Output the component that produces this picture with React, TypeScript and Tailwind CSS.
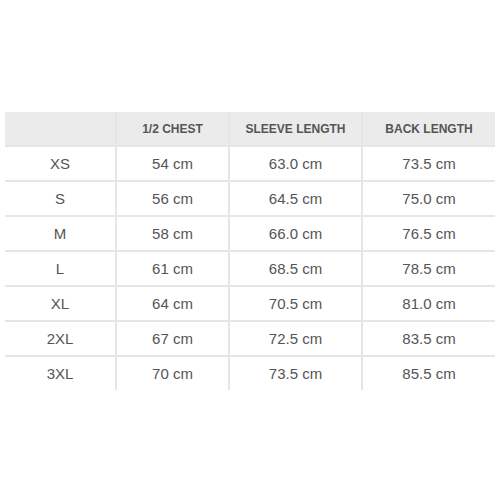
const headers = ['', '1/2 CHEST', 'SLEEVE LENGTH', 'BACK LENGTH']

const rows = [
  ['XS', '54 cm', '63.0 cm', '73.5 cm'],
  ['S', '56 cm', '64.5 cm', '75.0 cm'],
  ['M', '58 cm', '66.0 cm', '76.5 cm'],
  ['L', '61 cm', '68.5 cm', '78.5 cm'],
  ['XL', '64 cm', '70.5 cm', '81.0 cm'],
  ['2XL', '67 cm', '72.5 cm', '83.5 cm'],
  ['3XL', '70 cm', '73.5 cm', '85.5 cm'],
]

export default function App() {
  return (
    <div className="w-[500px] h-[500px] bg-white pt-[112px] px-[5px] font-['Liberation_Sans',Arial,sans-serif]">
      {/* Size chart */}
      <div className="grid grid-cols-[110px_111px_131px_132px] gap-[2px] bg-[#e6e6e6]">
        {headers.map((h, i) => (
          <div
            key={i}
            className="h-[33px] bg-[#ebebeb] flex items-center justify-center text-[12px] font-bold text-[#555]"
          >
            {h}
          </div>
        ))}
        {rows.map((row) =>
          row.map((cell, j) => (
            <div
              key={row[0] + j}
              className="h-[33px] pt-[2px] bg-white flex items-center justify-center text-[15px] text-[#555]"
            >
              {cell}
            </div>
          ))
        )}
      </div>
    </div>
  )
}
